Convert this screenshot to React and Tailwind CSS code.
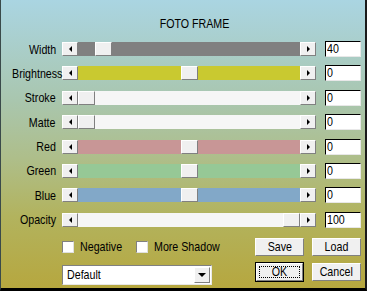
import { useState } from "react";

const font = "font-['Liberation_Sans',Arial,sans-serif]";

const rows = [
  { label: "Width", track: "bg-[#808080]", pos: "ml-[17px]", value: "40" },
  { label: "Brightness", track: "bg-[#c9c930]", pos: "ml-[103px]", value: "0" },
  { label: "Stroke", track: "bg-[#f6f6f6]", pos: "ml-0", value: "0" },
  { label: "Matte", track: "bg-[#f6f6f6]", pos: "ml-0", value: "0" },
  { label: "Red", track: "bg-[#c89696]", pos: "ml-[103px]", value: "0" },
  { label: "Green", track: "bg-[#96c896]", pos: "ml-[103px]", value: "0" },
  { label: "Blue", track: "bg-[#82a8c8]", pos: "ml-[103px]", value: "0" },
  { label: "Opacity", track: "bg-[#f6f6f6]", pos: "ml-[205px]", value: "100" }
];

// narrow text, the dialog font is a condensed sans
function N({ children, origin = "origin-left" }) {
  return <span className={`inline-block whitespace-nowrap scale-x-[0.82] ${origin}`}>{children}</span>;
}

function Raised({ className = "", children }) {
  return (
    <div className={`bg-[#f0f0f0] border border-t-white border-l-white border-r-[#808080] border-b-[#808080] flex items-center justify-center ${className}`}>
      {children}
    </div>
  );
}

function Arrow({ dir }) {
  return dir === "left" ? (
    <div className="w-0 h-0 border-y-[3px] border-y-transparent border-r-[3px] border-r-black" />
  ) : (
    <div className="w-0 h-0 border-y-[3px] border-y-transparent border-l-[3px] border-l-black" />
  );
}

function Slider({ track, pos }) {
  return (
    <div className="flex h-[14px] w-[254px]">
      <Raised className="w-[16px] h-[14px] shrink-0">
        <Arrow dir="left" />
      </Raised>
      <div className={`flex-1 h-[14px] ${track}`}>
        <Raised className={`w-[17px] h-[14px] ${pos}`} />
      </div>
      <Raised className="w-[16px] h-[14px] shrink-0">
        <Arrow dir="right" />
      </Raised>
    </div>
  );
}

function Check({ label }) {
  const [on, setOn] = useState(false);
  return (
    <label className="flex items-center gap-[6px] cursor-pointer" onClick={() => setOn(!on)}>
      <div className="w-[12px] h-[12px] bg-white border border-t-[#808080] border-l-[#808080] border-r-[#e0e0e0] border-b-[#e0e0e0] flex items-center justify-center text-[9px] leading-none">
        {on ? "✓" : ""}
      </div>
      <span className="text-[13px] leading-none"><N>{label}</N></span>
    </label>
  );
}

function Button({ children, isDefault }) {
  if (isDefault) {
    return (
      <div className="w-[49px] h-[20px] border border-black">
        <div className="w-full h-full bg-[#f0f0f0] border border-t-white border-l-white border-r-[#808080] border-b-[#808080] p-[2px]">
          <div className="w-full h-full border border-dotted border-black flex items-center justify-center text-[13px] leading-none">
            <N origin="origin-center">{children}</N>
          </div>
        </div>
      </div>
    );
  }
  return (
    <Raised className="w-[49px] h-[18px] text-[13px] leading-none">
      <N origin="origin-center">{children}</N>
    </Raised>
  );
}

export default function App() {
  return (
    <div className={`w-[367px] h-[291px] ${font} text-black bg-[linear-gradient(to_bottom,#aad5e2_0%,#a9c6ae_35%,#aebe8a_55%,#b2b35e_75%,#b6a73f_100%)] border-l border-l-[#3a4a4a] border-r-2 border-r-[#1a1a1a] border-b-[3px] border-b-black`}>
      <div className="h-[42px] flex items-start justify-center pt-[17px] pl-[22px] text-[13px] leading-none">
        <N origin="origin-center">FOTO FRAME</N>
      </div>
      <div className="flex flex-col gap-[10.4px]">
        {rows.map((r) => (
          <div key={r.label} className="flex items-center h-[14px]">
            <div className="w-[55px] text-right text-[13px] leading-none">
              <N origin="origin-right">{r.label}</N>
            </div>
            <div className="ml-[6px]">
              <Slider track={r.track} pos={r.pos} />
            </div>
            <div className="ml-[9px] w-[36px] h-[16px] bg-white border border-t-black border-l-black border-r-[#e8e8e8] border-b-[#e8e8e8] text-[13px] leading-[14px] pl-[1px]">
              <N>{r.value}</N>
            </div>
          </div>
        ))}
      </div>
      <div className="flex mt-[11px] ml-[61px]">
        <div className="w-[193px] flex flex-col">
          <div className="flex gap-[5px] h-[18px] items-center">
            <Check label="Negative" />
            <Check label="More Shadow" />
          </div>
          <div className="mt-[9px] w-[150px] h-[20px] bg-white border border-t-[#808080] border-l-[#808080] border-r-[#e8e8e8] border-b-[#e8e8e8] flex items-center">
            <span className="flex-1 pl-[4px] text-[13px] leading-none"><N>Default</N></span>
            <Raised className="w-[16px] h-[16px] mr-[1px]">
              <div className="w-0 h-0 border-x-[4px] border-x-transparent border-t-[4px] border-t-black" />
            </Raised>
          </div>
        </div>
        <div className="flex flex-col">
          <div className="flex gap-[8px]">
            <Button>Save</Button>
            <Button>Load</Button>
          </div>
          <div className="flex gap-[8px] mt-[6px] items-center">
            <Button isDefault>OK</Button>
            <Button>Cancel</Button>
          </div>
        </div>
      </div>
    </div>
  );
}
